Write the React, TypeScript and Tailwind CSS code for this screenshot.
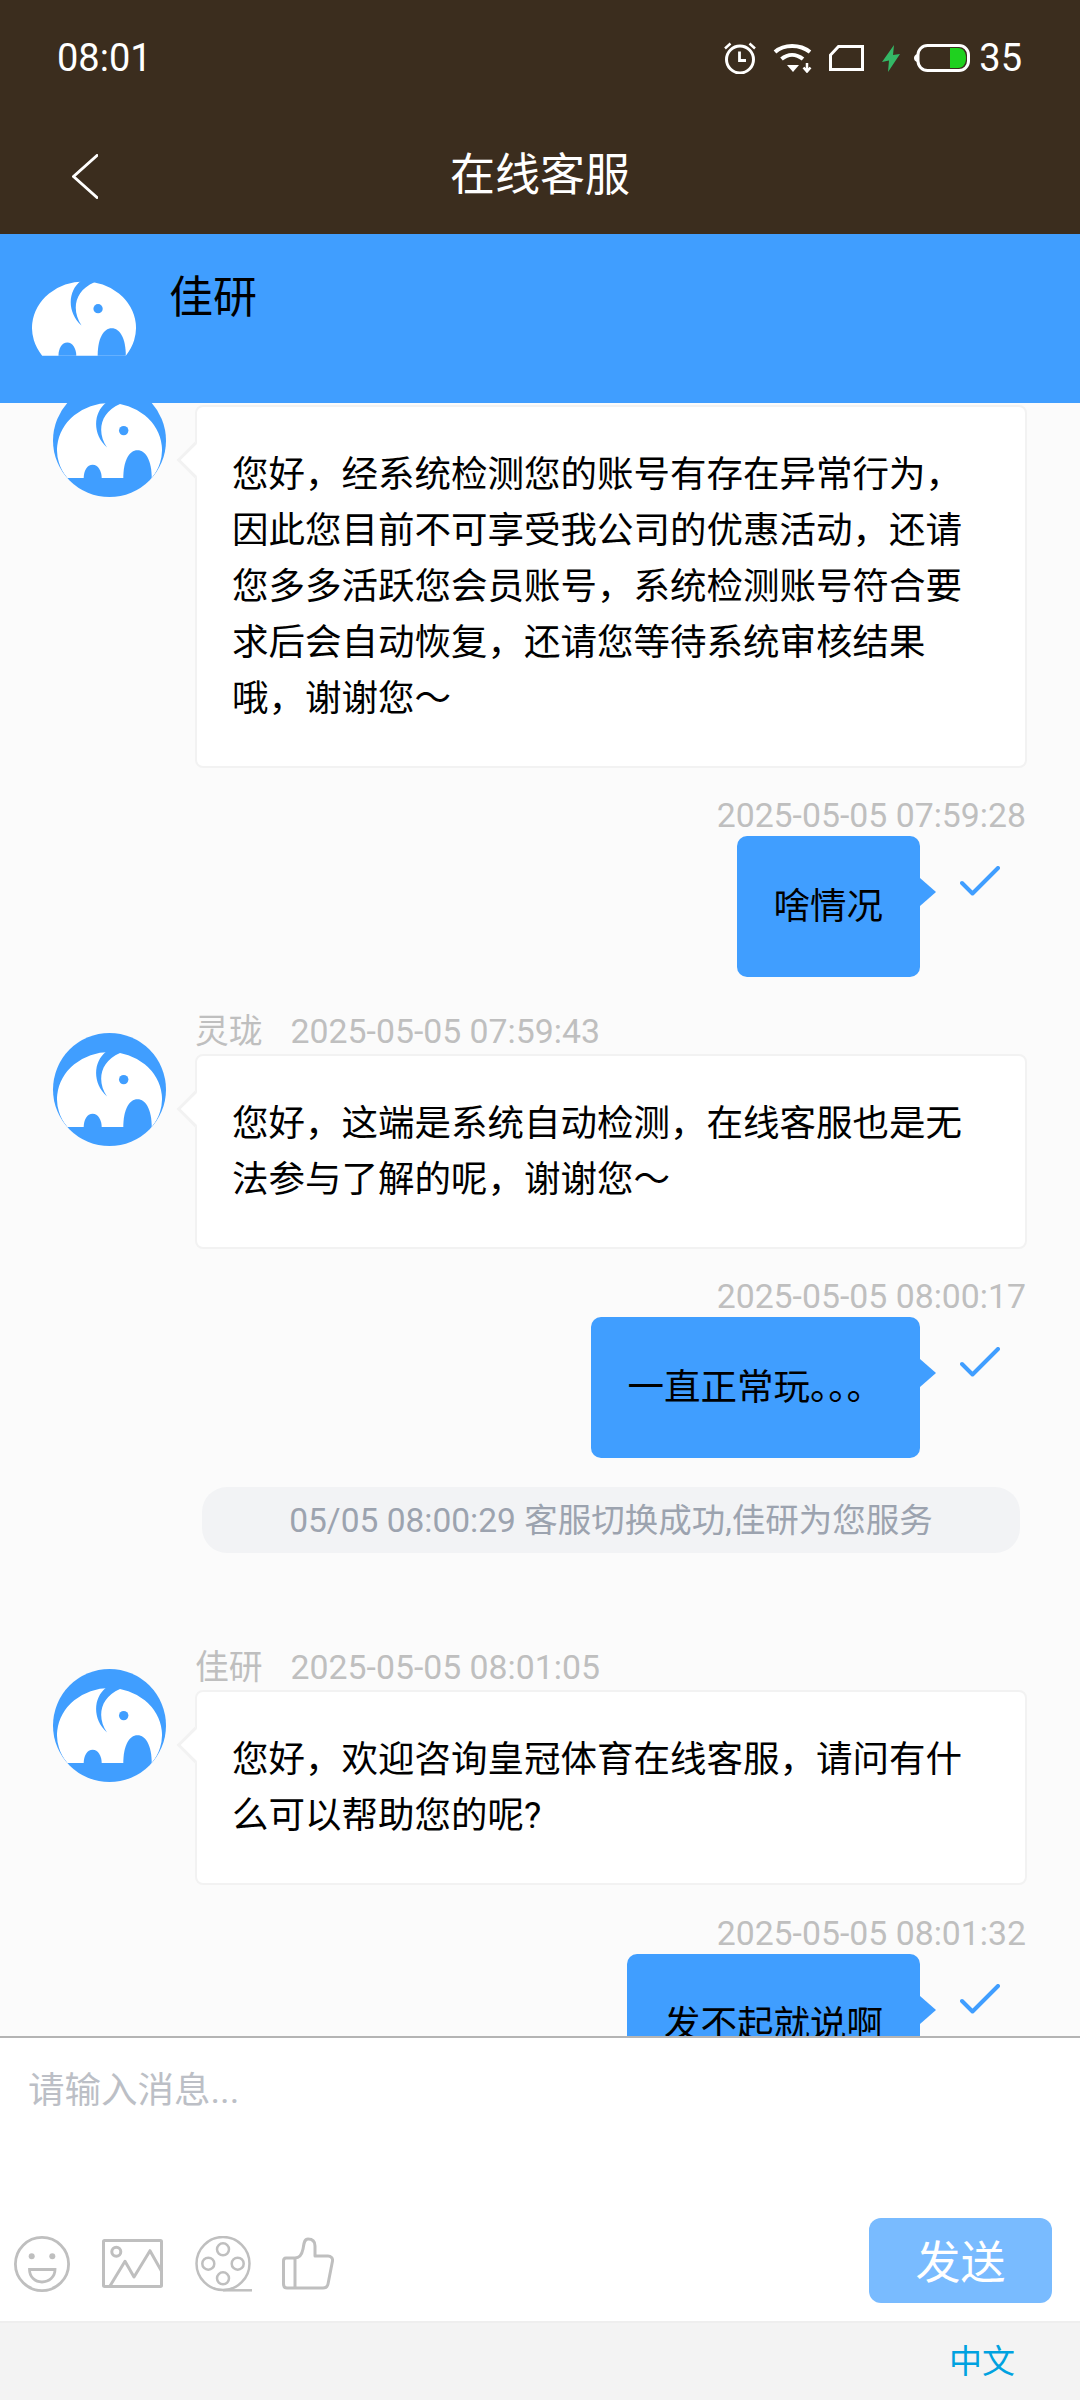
import React from "react";

const stack = "font-['Roboto','Noto_Sans_CJK_SC',sans-serif]";

// White elephant used by the header and message avatars
const Elephant = ({ className }: { className: string }) => (
  <svg viewBox="0 0 105 75" className={className}>
    <path d="M10.3 75A52.5 47 0 1 1 94.7 75Z" fill="#fff" />
    <path d="M50 -1C37 8 34 30 50 44.5C40 30 42 10 63 1L63 -1Z" fill="#409eff" />
    <circle cx="66.7" cy="27.6" r="4.7" fill="#409eff" />
    <path d="M66.3 75C66.3 58 72 47.3 80.5 47.3C89 47.3 94.7 58 94.7 75Z" fill="#409eff" />
    <path d="M26.7 75C26.7 68 30 61.7 35.7 61.7C41 61.7 44.7 68 44.7 75Z" fill="#409eff" />
  </svg>
);

const Avatar = () => (
  <div className="w-[113px] h-[113px] shrink-0 mt-[25px] rounded-full bg-[#409eff] overflow-hidden pl-[4px] pt-[19px]">
    <Elephant className="w-[105px] h-[75px] block" />
  </div>
);

const LeftMessage = ({ name, time, text }: { name?: string; time?: string; text: string }) => (
  <div className="flex pl-[53px] pr-[53px] gap-[29px]">
    <Avatar />
    <div className="flex-1 min-w-0">
      <div className="h-[46px] flex items-center gap-[28px] pt-[2px] text-[33.8px] text-[#bfbfbf]">
        <span>{name}</span>
        <span>{time}</span>
      </div>
      <div className="relative bg-white border-2 border-[#f2f2f2] rounded-[8px] pl-[35px] pr-[35px] pt-[40px] pb-[39px] text-[36.5px] leading-[56px] text-black">
        <div className="absolute left-[-15px] top-[40px] w-[26px] h-[26px] rotate-45 bg-white border-l-[3px] border-b-[3px] border-[#f2f2f2]" />
        {text}
      </div>
    </div>
  </div>
);

const RightMessage = ({ time, text }: { time: string; text: string }) => (
  <div className="flex flex-col items-end pr-[54px]">
    <div className="h-[42px] flex items-center pt-[2px] text-[33.8px] text-[#bfbfbf]">{time}</div>
    <div className="flex items-start pr-[26px]">
      <div className="relative bg-[#409eff] rounded-[10px] px-[37px] py-[42px] text-[36.5px] leading-[57px] text-black">
        <div className="absolute left-full top-[42px] w-0 h-0 border-y-[14px] border-y-transparent border-l-[16px] border-l-[#409eff]" />
        {text}
      </div>
      <svg viewBox="0 0 40 30" className="w-[40px] h-[30px] ml-[40px] mt-[30px]" fill="none" stroke="#409eff" strokeWidth="4" strokeLinecap="round" strokeLinejoin="round">
        <path d="M2 17L12.5 27.5L38 2" />
      </svg>
    </div>
  </div>
);

export default function App() {
  return (
    <div lang="zh-CN" className={`w-[1080px] h-[2400px] flex flex-col bg-white overflow-hidden ${stack}`}>
      {/* Status bar and title */}
      <div className="bg-[#3b2d1e] shrink-0 text-white">
        <div className="h-[116px] flex items-center justify-between pl-[57px] pr-[58px]">
          <span className="text-[38px]">08:01</span>
          <div className="flex items-center">
            <svg viewBox="0 0 34 32" className="w-[34px] h-[32px]" fill="none" stroke="#fff" strokeWidth="3">
              <circle cx="17" cy="17.5" r="13.5" />
              <path d="M16.5 9.5V18.5H23" strokeWidth="2.8" />
              <path d="M2 6.5L7.5 1.5M32 6.5L26.5 1.5" strokeWidth="2.5" />
            </svg>
            <svg viewBox="0 0 40 30" className="w-[40px] h-[30px] ml-[16px]" fill="none" stroke="#fff" strokeWidth="4">
              <path d="M2 9C11 1 27 1 37 9" />
              <path d="M8.5 16C15 10.5 23 10.5 30 16" />
              <path d="M14 22H26L20 29Z" fill="#fff" stroke="none" />
              <path d="M34 20V28M30.5 24.5L34 28.5L37.5 24.5" strokeWidth="2.5" />
            </svg>
            <svg viewBox="0 0 35 26" className="w-[35px] h-[26px] ml-[16px]" fill="none" stroke="#fff" strokeWidth="3">
              <path d="M9.5 1.5H33.5V24.5H1.5V10Z" />
            </svg>
            <svg viewBox="0 0 18 27" className="w-[18px] h-[27px] ml-[18px]" fill="#34b866">
              <path d="M12 0L0 17L7 15.5L6 27L18 9L11 10Z" />
            </svg>
            <svg viewBox="0 0 56 28" className="w-[56px] h-[28px] ml-[14px]" fill="none">
              <rect x="4" y="1.5" width="50.5" height="25" rx="9.5" stroke="#fff" strokeWidth="3" />
              <path d="M36 4H44C49 4 52 8 52 14C52 20 49 24 44 24H36Z" fill="#1fd11f" />
              <path d="M3 10V18C1 17 0 16 0 14C0 12 1 11 3 10Z" fill="#fff" />
            </svg>
            <span className="text-[38px] ml-[9px]">35</span>
          </div>
        </div>
        <div className="h-[118px] flex items-center pt-[2px]">
          <div className="flex-1">
            <svg viewBox="0 0 26 45" className="w-[26px] h-[45px] ml-[72px]" fill="none" stroke="#fff" strokeWidth="3" strokeLinecap="round" strokeLinejoin="round">
              <path d="M25 1.5L1.5 22.5L25 43.5" />
            </svg>
          </div>
          <span className="text-[45px]">在线客服</span>
          <div className="flex-1" />
        </div>
      </div>

      {/* Agent header */}
      <div className="h-[169px] shrink-0 bg-[#409eff] flex items-start pl-[32px]">
        <Elephant className="w-[104px] h-[75px] mt-[47px]" />
        <span className="ml-[33px] mt-[34px] text-[44px] leading-[60px] text-black">佳研</span>
      </div>

      {/* Messages */}
      <div className="flex-1 min-h-0 overflow-hidden bg-[#fbfbfb]">
        <div className="mt-[-44px]">
          <LeftMessage text="您好，经系统检测您的账号有存在异常行为，因此您目前不可享受我公司的优惠活动，还请您多多活跃您会员账号，系统检测账号符合要求后会自动恢复，还请您等待系统审核结果哦，谢谢您～" />
        </div>
        <div className="mt-[26px]">
          <RightMessage time="2025-05-05 07:59:28" text="啥情况" />
        </div>
        <div className="mt-[31px]">
          <LeftMessage name="灵珑" time="2025-05-05 07:59:43" text="您好，这端是系统自动检测，在线客服也是无法参与了解的呢，谢谢您～" />
        </div>
        <div className="mt-[26px]">
          <RightMessage time="2025-05-05 08:00:17" text="一直正常玩。。。" />
        </div>
        <div className="mt-[29px] ml-[202px] mr-[60px] h-[66px] rounded-[25px] bg-[#f2f3f5] flex items-center justify-center pt-[2px] text-[33.5px] text-[#9ca3af]">
          05/05 08:00:29 客服切换成功,佳研为您服务
        </div>
        <div className="mt-[91px]">
          <LeftMessage name="佳研" time="2025-05-05 08:01:05" text="您好，欢迎咨询皇冠体育在线客服，请问有什么可以帮助您的呢?" />
        </div>
        <div className="mt-[27px]">
          <RightMessage time="2025-05-05 08:01:32" text="发不起就说啊" />
        </div>
      </div>

      {/* Input */}
      <div className="h-[285px] shrink-0 border-t-2 border-[#b4b4b4] flex flex-col">
        <div className="pl-[28px] pt-[25px] text-[36.5px] leading-[56px] text-[#bcbfc6]">请输入消息...</div>
        <div className="mt-auto flex items-center pl-[14px] pr-[28px] pb-[18px]">
          <div className="flex items-center gap-[32px] mt-[6px] text-[#bfbfbf]">
            <svg viewBox="0 0 56 56" className="w-[56px] h-[56px]" fill="none" stroke="currentColor" strokeWidth="2.8">
              <circle cx="28" cy="28" r="26.6" />
              <circle cx="17.7" cy="20.3" r="3" fill="currentColor" stroke="none" />
              <circle cx="38.3" cy="20.3" r="3" fill="currentColor" stroke="none" />
              <path d="M15.5 33.5H41C41 41 35 46 28 46C21 46 15.5 41 15.5 33.5Z" />
            </svg>
            <svg viewBox="0 0 61 49" className="w-[61px] h-[49px]" fill="none" stroke="currentColor" strokeWidth="3">
              <rect x="1.5" y="1.5" width="58" height="46" rx="1" />
              <circle cx="14.3" cy="12.7" r="4.5" />
              <path d="M8 47L23 22.3L32 38L48 11.7L60 33" strokeLinejoin="round" />
            </svg>
            <svg viewBox="0 0 57 56" className="w-[57px] h-[56px]" fill="none" stroke="currentColor" strokeWidth="2.5">
              <circle cx="28" cy="27.5" r="26.5" />
              <circle cx="28" cy="13.3" r="6" />
              <circle cx="28" cy="42.3" r="6" />
              <circle cx="13.3" cy="27.7" r="6" />
              <circle cx="42.7" cy="27.7" r="6" />
              <path d="M28 54.3H57" />
            </svg>
            <svg viewBox="0 0 52 53" className="w-[52px] h-[53px] ml-[-2px]" fill="none" stroke="currentColor" strokeWidth="3" strokeLinejoin="round">
              <path d="M4 21H13C18 21 20 17 21 12C22 7 22 2 26 2C30 2 33 4 33 9V19H46C49 19 51 21.5 50.5 24L46 47C45.5 49.5 44 51 41 51H5C2.5 51 1.5 49.5 1.5 47V24C1.5 22 2.5 21 4 21ZM13 21V51" />
            </svg>
          </div>
          <div className="ml-auto w-[183px] h-[85px] rounded-[12px] bg-[#79bbff] flex items-center justify-center pt-[7px] text-[45px] text-white">发送</div>
        </div>
      </div>

      {/* Language bar */}
      <div className="h-[79px] shrink-0 bg-[#f3f3f3] border-t-2 border-[#eeeeee] flex items-center justify-end pr-[65px] text-[33px] text-[#00a2e0]">中文</div>
    </div>
  );
}
